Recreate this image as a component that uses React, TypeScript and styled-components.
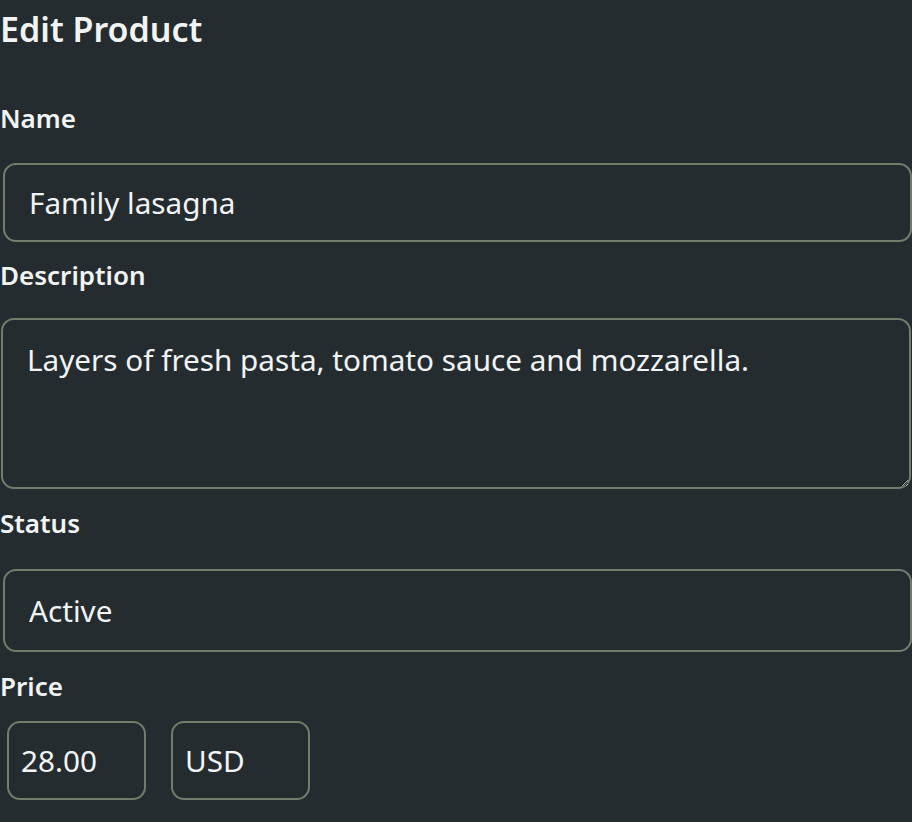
import { createGlobalStyle } from 'styled-components';
import styled from 'styled-components';

const GlobalStyle = createGlobalStyle`
  html, body {
    margin: 0;
    padding: 0;
    background: #252c2f;
  }
  body {
    font-family: 'Noto Sans', 'Open Sans', sans-serif;
    color: #f2f4f4;
  }
`;

const Page = styled.div`
  width: 912px;
  height: 822px;
  overflow: hidden;
  display: flex;
  flex-direction: column;
`;

const Title = styled.h1`
  margin: 0;
  padding-top: 5px;
  font-size: 34px;
  line-height: 48px;
  font-weight: 600;
`;

const Label = styled.label<{ $top: number; $bottom: number }>`
  display: block;
  margin-top: ${(p) => p.$top}px;
  margin-bottom: ${(p) => p.$bottom}px;
  font-size: 26px;
  line-height: 36px;
  font-weight: 600;
`;

const fieldStyles = `
  box-sizing: border-box;
  background: transparent;
  color: #f2f4f4;
  border: 2px solid #747c6c;
  border-radius: 13px;
  font-family: 'Noto Sans', 'Open Sans', sans-serif;
  font-size: 29.7px;
  outline: none;
  color-scheme: dark;
`;

const TextInput = styled.input`
  ${fieldStyles}
  display: block;
  margin-left: 3px;
  width: 909px;
  height: 79px;
  padding: 0 24px;
`;

const TextArea = styled.textarea`
  ${fieldStyles}
  display: block;
  margin-left: 1px;
  width: 910px;
  height: 171px;
  padding: 20px 24px;
  resize: vertical;
  line-height: 40px;
`;

const StatusBox = styled.select`
  ${fieldStyles}
  display: block;
  margin-left: 3px;
  width: 909px;
  height: 83px;
  padding: 0 24px;
  appearance: none;
  background: transparent;
`;

const PriceRow = styled.div`
  display: flex;
  gap: 25px;
  padding-left: 7px;
`;

const SmallInput = styled.input`
  ${fieldStyles}
  width: 139px;
  height: 79px;
  padding: 0 12px;
`;

export default function App() {
  return (
    <Page>
      <GlobalStyle />
      <Title>Edit Product</Title>
      <Label $top={47} $bottom={27}>Name</Label>
      <TextInput defaultValue="Family lasagna" />
      <Label $top={15} $bottom={25}>Description</Label>
      <TextArea defaultValue="Layers of fresh pasta, tomato sauce and mozzarella." />
      <Label $top={16} $bottom={28}>Status</Label>
      <StatusBox defaultValue="Active">
        <option>Active</option>
        <option>Inactive</option>
        <option>Draft</option>
      </StatusBox>
      <Label $top={16} $bottom={17}>Price</Label>
      <PriceRow>
        <SmallInput defaultValue="28.00" />
        <SmallInput defaultValue="USD" />
      </PriceRow>
    </Page>
  );
}
